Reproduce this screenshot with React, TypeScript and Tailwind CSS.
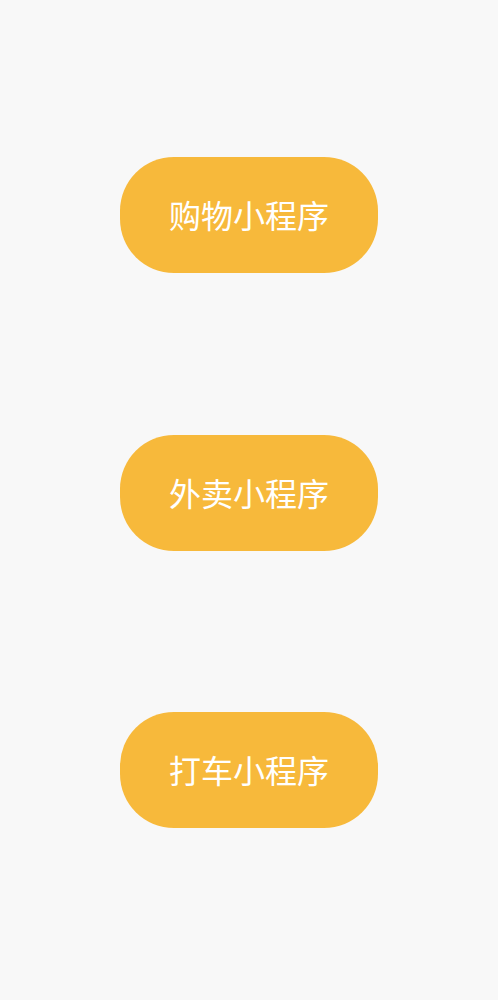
const items = ["购物小程序", "外卖小程序", "打车小程序"];

export default function App() {
  return (
    <div
      className="min-h-[1000px] w-full bg-[#f8f8f8] flex flex-col items-center pt-[157px] gap-[161.5px]"
      style={{ fontFamily: '"Noto Sans CJK SC", "Noto Sans", sans-serif' }}
    >
      {items.map((label) => (
        <button
          key={label}
          className="w-[258px] h-[116px] rounded-[54px] bg-[#f7b93b] text-white text-[32px] leading-none font-normal flex items-center justify-center pb-[2px]"
        >
          {label}
        </button>
      ))}
    </div>
  );
}
